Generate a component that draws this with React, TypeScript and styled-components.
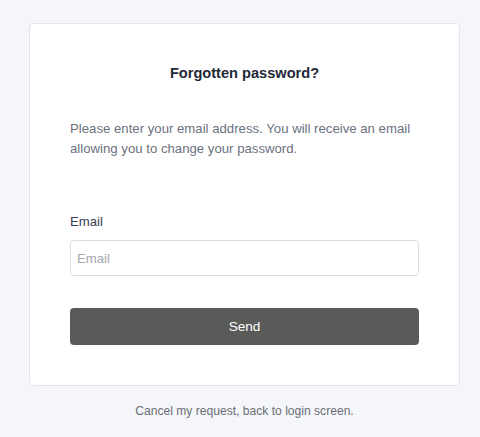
import React from 'react'
import styled, { createGlobalStyle } from 'styled-components'

const GlobalStyle = createGlobalStyle`
  html, body {
    margin: 0;
    padding: 0;
    background: #f5f6fa;
    font-family: "Liberation Sans", Arial, sans-serif;
  }
`

const Page = styled.div`
  display: flex;
  flex-direction: column;
  align-items: center;
  padding: 23px 0 0 9px;
  min-height: 437px;
  box-sizing: border-box;
`

const Card = styled.div`
  width: 431px;
  box-sizing: border-box;
  background: #ffffff;
  border: 1px solid #e3e5ea;
  border-radius: 4px;
  padding: 39px 40px 40px;
`

const Title = styled.h1`
  margin: 0;
  font-size: 14.6px;
  line-height: 20px;
  font-weight: 700;
  color: #1f2937;
  text-align: center;
`

const Intro = styled.p`
  margin: 36px 0 0;
  font-size: 13.2px;
  line-height: 20px;
  color: #6b7280;
`

const Field = styled.div`
  display: flex;
  flex-direction: column;
  gap: 8px;
  margin-top: 53px;
`

const Label = styled.label`
  font-size: 13.2px;
  line-height: 20px;
  color: #374151;
`

const Input = styled.input`
  height: 36px;
  box-sizing: border-box;
  width: 100%;
  border: 1px solid #dcdde0;
  border-radius: 4px;
  padding: 0 6px;
  font-family: "Liberation Sans", Arial, sans-serif;
  font-size: 13.2px;
  color: #374151;
  outline: none;

  &::placeholder {
    color: #a3a7ae;
  }
`

const SendButton = styled.button`
  margin-top: 32px;
  width: 100%;
  height: 37px;
  border: none;
  border-radius: 4px;
  background: #5a5a59;
  color: #ffffff;
  font-family: "Liberation Sans", Arial, sans-serif;
  font-size: 13.6px;
  cursor: pointer;
`

const CancelLink = styled.a`
  margin-top: 17px;
  font-size: 12.1px;
  line-height: 16px;
  color: #6b6e75;
  text-decoration: none;
  cursor: pointer;
`

const App: React.FC = () => {
  return (
    <>
      <GlobalStyle />
      <Page>
        <Card>
          <Title>Forgotten password?</Title>
          <Intro>
            Please enter your email address. You will receive an email allowing you to change your
            password.
          </Intro>
          <Field>
            <Label htmlFor="email">Email</Label>
            <Input id="email" type="email" placeholder="Email" />
          </Field>
          <SendButton type="button">Send</SendButton>
        </Card>
        <CancelLink>Cancel my request, back to login screen.</CancelLink>
      </Page>
    </>
  )
}

export default App
